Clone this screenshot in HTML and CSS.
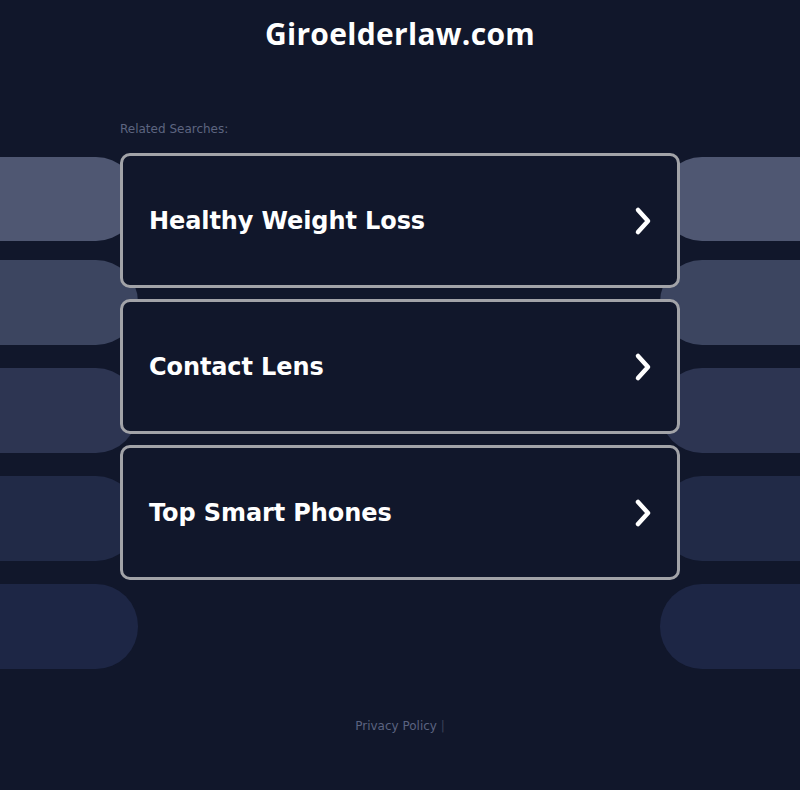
FILE: index.html
```html
<!DOCTYPE html>
<html>
<head>
<meta charset="utf-8">
<title>Giroelderlaw.com</title>
<link rel="stylesheet" href="styles.css">
</head>
<body>
<div class="page">
  <h1 class="title">Giroelderlaw.com</h1>
  <div class="main">
    <div class="deco" aria-hidden="true">
      <div class="deco-row first"><span class="pill pl p1"></span><span class="pill pr p1"></span></div>
      <div class="deco-row"><span class="pill pl p2"></span><span class="pill pr p2"></span></div>
      <div class="deco-row"><span class="pill pl p3"></span><span class="pill pr p3"></span></div>
      <div class="deco-row"><span class="pill pl p4"></span><span class="pill pr p4"></span></div>
      <div class="deco-row"><span class="pill pl p5"></span><span class="pill pr p5"></span></div>
    </div>
    <div class="content">
      <div class="related">Related Searches:</div>
      <a class="card" href="#"><span class="label">Healthy Weight Loss</span>
        <svg class="chev" width="20" height="30" viewBox="0 0 20 30"><path d="M5 4 L15 15 L5 26" fill="none" stroke="#fff" stroke-width="4.5" stroke-linecap="round" stroke-linejoin="round"/></svg></a>
      <a class="card" href="#"><span class="label">Contact Lens</span>
        <svg class="chev" width="20" height="30" viewBox="0 0 20 30"><path d="M5 4 L15 15 L5 26" fill="none" stroke="#fff" stroke-width="4.5" stroke-linecap="round" stroke-linejoin="round"/></svg></a>
      <a class="card" href="#"><span class="label">Top Smart Phones</span>
        <svg class="chev" width="20" height="30" viewBox="0 0 20 30"><path d="M5 4 L15 15 L5 26" fill="none" stroke="#fff" stroke-width="4.5" stroke-linecap="round" stroke-linejoin="round"/></svg></a>
    </div>
  </div>
  <div class="footer"><a href="#">Privacy Policy</a> <span class="sep">|</span></div>
</div>
</body>
</html>
```
FILE: styles.css
```css
html, body {
  margin: 0;
  padding: 0;
  background: #11172b;
}
body {
  font-family: "DejaVu Sans", sans-serif;
  overflow: hidden;
}
.page {
  width: 800px;
  height: 790px;
}
.title {
  margin: 0;
  padding-top: 14px;
  height: 40px;
  text-align: center;
  font-family: "Open Sans", sans-serif;
  font-weight: 700;
  font-size: 30px;
  line-height: 40px;
  color: #ffffff;
  letter-spacing: 0.3px;
}
.main {
  position: relative;
  margin-top: 66px;
  height: 560px;
}
.deco {
  position: absolute;
  left: 0;
  top: 37px;
  width: 800px;
  display: flex;
  flex-direction: column;
  gap: 23px;
}
.deco-row {
  display: flex;
  justify-content: space-between;
  height: 85px;
}
.deco-row.first {
  height: 84px;
  margin-bottom: -4px;
}
.pill {
  display: block;
  height: 100%;
  width: 140px;
}
.pill.pl { border-radius: 0 42px 42px 0; margin-left: -2px; }
.pill.pr { border-radius: 42px 0 0 42px; margin-right: -2px; width: 142px; }
.p1 { background: #4f5772; }
.p2 { background: #3c4560; }
.p3 { background: #2d3552; }
.p4 { background: #212a47; }
.p5 { background: #1d2645; }
.content {
  position: relative;
  width: 560px;
  margin: 0 auto;
  display: flex;
  flex-direction: column;
  gap: 11px;
}
.related {
  font-size: 12px;
  color: #5d6580;
  height: 14px;
  line-height: 14px;
  margin-bottom: 6px;
  padding-top: 2px;
  font-family: "DejaVu Sans", sans-serif;
}
.card {
  box-sizing: border-box;
  height: 135px;
  border: 3px solid #a2a3a8;
  border-radius: 10px;
  background: #11172b;
  display: flex;
  align-items: center;
  justify-content: space-between;
  padding: 0 24px 0 26px;
  text-decoration: none;
}
.label {
  color: #ffffff;
  font-weight: 700;
  font-size: 24px;
  letter-spacing: -0.1px;
}
.chev { display: block; }
.footer {
  margin-top: 39px;
  text-align: center;
  font-size: 12px;
  color: #5b6380;
}
.footer a { color: #5b6380; text-decoration: none; }
.sep { color: #3b4258; }
```
